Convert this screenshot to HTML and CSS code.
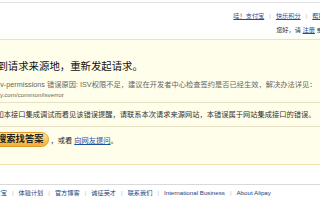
FILE: index.html
```html
<!DOCTYPE html>
<html lang="zh-CN">
<head>
<meta charset="utf-8">
<title>支付宝 - 错误提示</title>
<link rel="stylesheet" href="styles.css">
</head>
<body>
<div class="topline"></div>
<div class="header">
  <div class="nav">
    <a href="#">哇！支付宝</a><span class="sep">|</span><a href="#">快乐积分</a><span class="sep">|</span><a href="#">帮助中心</a>
  </div>
  <div class="welcome">您好，请 <a href="#">注册</a> 或 <a href="#">登录</a></div>
</div>
<div class="notice">
  <h1 class="title">调试错误，请回到请求来源地，重新发起请求。</h1>
  <p class="detail">isv-permissions 错误原因: ISV权限不足，建议在开发者中心检查签约是否已经生效，解决办法详见：</p>
  <p class="url">https://openhome.alipay.com/common/isverror</p>
  <div class="rule"></div>
  <p class="tip">如本接口集成调试而看见该错误提醒，请联系本次请求来源网站，本错误属于网站集成接口的错误。</p>
  <div class="rule"></div>
  <div class="actions"><a class="btn" href="#">搜索找答案</a><span class="or">，或看 <a href="#">向网友提问</a>。</span></div>
</div>
<div class="footer">
  <a href="#">关于支付宝</a><span class="sep">|</span><a href="#">体验计划</a><span class="sep">|</span><a href="#">官方博客</a><span class="sep">|</span><a href="#">诚征英才</a><span class="sep">|</span><a href="#">联系我们</a><span class="sep">|</span><a href="#">International Business</a><span class="sep">|</span><a href="#">About Alipay</a>
</div>
</body>
</html>
```
FILE: styles.css
```css
html, body {
  margin: 0;
  padding: 0;
  overflow: hidden;
  background: #fff;
}
body {
  width: 320px;
  height: 200px;
  font-family: "Liberation Sans", "Noto Sans CJK SC", sans-serif;
  color: #333;
}
a {
  color: #1f4f9f;
}
.topline {
  height: 1px;
  margin-top: 2px;
  background: #e2e2e2;
}
.header {
  display: flex;
  flex-direction: column;
  align-items: flex-end;
  gap: 6.5px;
  margin-right: -17px;
  padding-top: 8.5px;
  font-size: 6.2px;
  line-height: 8px;
  white-space: nowrap;
  background: linear-gradient(#fff 78%, #fbfff6);
}
.nav .sep {
  margin: 0 5px;
  color: #bbb;
}
.welcome {
  color: #222;
  padding-bottom: 5px;
}
.notice {
  margin: 0 -10px;
  padding: 20px 9px 17px;
  border: 1px solid #f3dfb2;
  background: #fffeea;
  white-space: nowrap;
}
.title {
  margin: 0;
  font-size: 10.4px;
  line-height: 14px;
  font-weight: normal;
  color: #111;
  text-indent: -75.3px;
}
.detail {
  margin: 5.5px 0 0;
  font-size: 7.25px;
  line-height: 10px;
  color: #666;
  text-indent: -5px;
}
.url {
  margin: 0;
  font-size: 6.2px;
  line-height: 10px;
  color: #666;
  text-indent: -62.7px;
}
.rule {
  height: 1px;
  background: #e6e0c4;
  margin: 2.5px -9px 0;
}
.tip {
  margin: 7px 0 6px;
  font-size: 7.25px;
  line-height: 10px;
  color: #333;
  text-indent: -3.5px;
}
.actions {
  display: flex;
  align-items: center;
  margin-top: 5px;
  margin-left: -9px;
  font-size: 7.25px;
}
.btn {
  display: block;
  height: 13px;
  padding: 0 4px 0 5px;
  border: 1px solid #e09a28;
  border-radius: 8px;
  background: linear-gradient(#ffeaa6, #fbc85a 55%, #f4ae32);
  font-size: 9.3px;
  line-height: 13px;
  font-weight: bold;
  color: #222;
  text-decoration: none;
}
.or {
  margin-left: 2px;
  color: #222;
}
.footer {
  display: flex;
  margin: 19px 0 0 -24px;
  padding-top: 4px;
  border-top: 1px solid #d9d9d9;
  font-size: 6.2px;
  line-height: 8px;
  white-space: nowrap;
}
.footer a {
  color: #223f77;
  text-decoration: none;
}
.footer .sep {
  margin: 0 5px;
  color: #bbb;
}
```
